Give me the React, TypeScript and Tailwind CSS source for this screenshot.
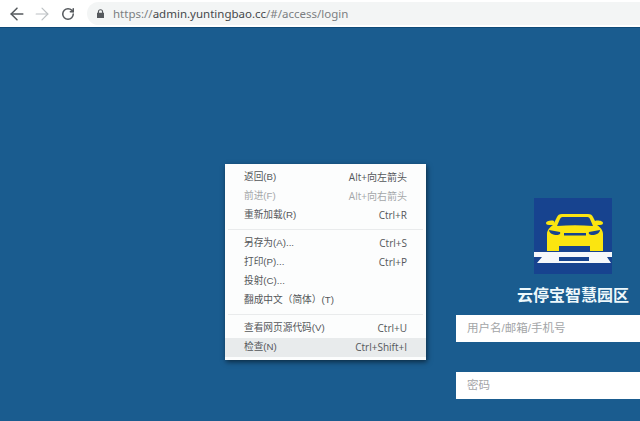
import { ArrowLeft, ArrowRight, RotateCw } from "lucide-react";

const cjk = "font-['Liberation_Sans','Noto_Sans_CJK_SC',sans-serif]";
const keysFont = "font-['Open_Sans','Noto_Sans_CJK_SC',sans-serif]";

type Item = { label: string; keys?: string; disabled?: boolean; active?: boolean };

const groups: Item[][] = [
  [
    { label: "返回(B)", keys: "Alt+向左箭头" },
    { label: "前进(F)", keys: "Alt+向右箭头", disabled: true },
    { label: "重新加载(R)", keys: "Ctrl+R" },
  ],
  [
    { label: "另存为(A)...", keys: "Ctrl+S" },
    { label: "打印(P)...", keys: "Ctrl+P" },
    { label: "投射(C)..." },
    { label: "翻成中文（简体）(T)" },
  ],
  [
    { label: "查看网页源代码(V)", keys: "Ctrl+U" },
    { label: "检查(N)", keys: "Ctrl+Shift+I", active: true },
  ],
];

function Menu() {
  return (
    <div className={`absolute left-[225px] top-[136px] w-[201px] bg-[#fcfdfd] pt-[4px] pb-[3px] shadow-[1px_2px_5px_rgba(0,0,0,0.55)] text-[9.7px] ${cjk}`}>
      {groups.map((g, i) => (
        <div key={i}>
          {i > 0 && <div className="mx-[3px] my-[4px] h-px bg-[#e9ebec]" />}
          {g.map((it) => (
            <div
              key={it.label}
              className={`flex h-[19px] items-center justify-between pl-[19px] pr-[19px] ${it.disabled ? "text-[#a4a7a9]" : "text-[#54575a]"} ${it.active ? "bg-[#e8ebec]" : ""}`}
            >
              <span>{it.label}</span>
              {it.keys && <span className={`${keysFont} text-[10px]`}>{it.keys}</span>}
            </div>
          ))}
        </div>
      ))}
    </div>
  );
}

function Logo() {
  return (
    <svg viewBox="0 0 78 76" className="h-[76px] w-[78px]">
      <rect width="78" height="76" fill="#17438f" />
      <path d="M13 53V36c0-4 3-7 6-9l4-8c1-2 2-3 5-3h26c3 0 4 1 5 3l4 8c3 2 6 5 6 9v17z" fill="#fbe510" />
      <path d="M12 25c0-2 5-3 8-2l1 4h-6c-2 0-3-1-3-2zM69 25c0-2-5-3-8-2l-1 4h6c2 0 3-1 3-2z" fill="#fbe510" />
      <path d="M23 28l3-7c1-2 2-2 4-2h22c2 0 3 0 4 2l3 7c-12-1-24-1-36 0z" fill="#17438f" />
      <path d="M15 32l11 2c1 2-1 3-3 3-4 0-8-2-8-5zM66 32l-11 2c-1 2 1 3 3 3 4 0 8-2 8-5z" fill="#17438f" />
      <rect x="30" y="35" width="22" height="2.5" fill="#17438f" />
      <rect x="25" y="48" width="31" height="6" fill="#17438f" />
      <rect y="54" width="78" height="5" fill="#f6f8fa" />
      <path d="M8 59h17v6H3zM55 59h18l4 6H55z" fill="#f6f8fa" />
      <rect x="25" y="63" width="30" height="2" fill="#f6f8fa" />
    </svg>
  );
}

export default function App() {
  return (
    <div className="flex h-[421px] w-[640px] flex-col overflow-hidden bg-[#1a5c8f]">
      <header className="flex h-[28px] shrink-0 items-center border-b border-[#0f4a78] bg-white pl-[7px]">
        <ArrowLeft size={20} strokeWidth={1.8} className="text-[#55595d]" />
        <ArrowRight size={20} strokeWidth={1.4} className="ml-[5px] text-[#bcc0c3]" />
        <RotateCw size={14} strokeWidth={2.6} className="ml-[9px] text-[#55595d]" />
        <div className="ml-[12px] flex h-[23px] flex-1 items-center rounded-l-full bg-[#f3f5f5] pl-[10px]">
          <svg viewBox="0 0 8 10" className="h-[9px] w-[7px] shrink-0">
            <path d="M1 4V3a3 3 0 0 1 6 0v1h1v6H0V4zM2.3 4h3.4V3a1.7 1.7 0 0 0-3.4 0z" fill="#55595d" />
          </svg>
          <span className="ml-[9px] font-['Noto_Sans',sans-serif] text-[11.5px] text-[#45484b]">
            <span className="text-[#7b7e81]">https://</span>admin.yuntingbao.cc<span className="text-[#7b7e81]">/#/access/login</span>
          </span>
        </div>
      </header>
      <main className="relative flex-1">
        <Menu />
        <div className="ml-[456px] flex w-[200px] flex-col">
          <div className="mt-[170px] ml-[78px]">
            <Logo />
          </div>
          <h1 className={`mt-[11px] ml-[61px] h-[22px] whitespace-nowrap text-[16px] leading-[22px] font-bold text-[#eef8fb] ${cjk}`}>云停宝智慧园区</h1>
          <div className={`mt-[8px] flex h-[27px] items-center bg-white pl-[11px] text-[11.5px] text-[#a3a5a7] ${cjk}`}>用户名/邮箱/手机号</div>
          <div className={`mt-[30px] flex h-[27px] items-center bg-white pl-[11px] text-[11.5px] text-[#a3a5a7] ${cjk}`}>密码</div>
        </div>
      </main>
    </div>
  );
}
